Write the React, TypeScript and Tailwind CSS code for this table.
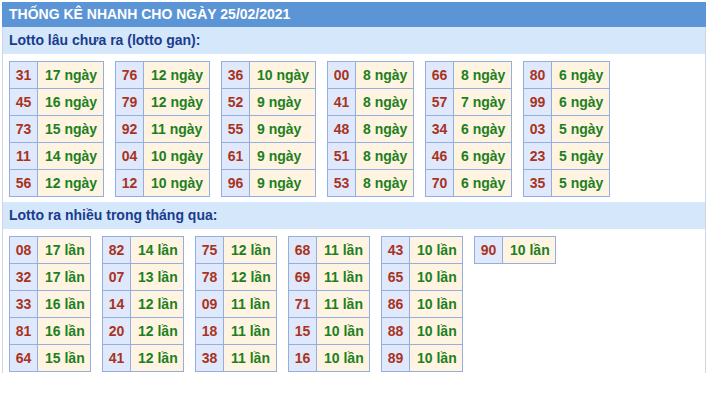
const ganData = [
  [["31", "17"], ["45", "16"], ["73", "15"], ["11", "14"], ["56", "12"]],
  [["76", "12"], ["79", "12"], ["92", "11"], ["04", "10"], ["12", "10"]],
  [["36", "10"], ["52", "9"], ["55", "9"], ["61", "9"], ["96", "9"]],
  [["00", "8"], ["41", "8"], ["48", "8"], ["51", "8"], ["53", "8"]],
  [["66", "8"], ["57", "7"], ["34", "6"], ["46", "6"], ["70", "6"]],
  [["80", "6"], ["99", "6"], ["03", "5"], ["23", "5"], ["35", "5"]],
];

const nhieuData = [
  [["08", "17"], ["32", "17"], ["33", "16"], ["81", "16"], ["64", "15"]],
  [["82", "14"], ["07", "13"], ["14", "12"], ["20", "12"], ["41", "12"]],
  [["75", "12"], ["78", "12"], ["09", "11"], ["18", "11"], ["38", "11"]],
  [["68", "11"], ["69", "11"], ["71", "11"], ["15", "10"], ["16", "10"]],
  [["43", "10"], ["65", "10"], ["86", "10"], ["88", "10"], ["89", "10"]],
  [["90", "10"]],
];

// value column widths, taken from the reference
const WIDE = "grid-cols-[28px_66px]";
const NARROW = "grid-cols-[28px_58px]";
const LAN = "grid-cols-[28px_53px]";

function StatTable({ rows, unit, cols }: { rows: string[][]; unit: string; cols: string }) {
  return (
    <div className={`grid ${cols} auto-rows-[27px] border-l border-t border-[#93afdf]`}>
      {rows.map(([num, count]) => (
        <>
          <div key={num + "n"} className="flex items-center justify-center bg-[#dfe9fb] border-r border-b border-[#93afdf] text-[#a8331f]">
            {num}
          </div>
          <div key={num + "c"} className="flex items-center pl-[7px] bg-[#fff4e2] border-r border-b border-[#93afdf] text-[#1d801d] whitespace-nowrap">
            {count} {unit}
          </div>
        </>
      ))}
    </div>
  );
}

function SubHeader({ title }: { title: string }) {
  return (
    <div className="h-[27px] flex items-center px-[6px] bg-[#d5e7fa] text-[#1a3c8e] font-bold text-[14px]">
      {title}
    </div>
  );
}

export default function App() {
  return (
    <div className="bg-white w-[707px] h-[394px] p-[2px] font-['Liberation_Sans',Arial,sans-serif]">
      <div className="w-[704px] h-[371px] border-l border-r border-[#cfd6df]">
        <div className="h-[25px] -mx-px flex items-center px-[7px] bg-[#5b95d6] text-white font-bold text-[14px]">
          THỐNG KÊ NHANH CHO NGÀY 25/02/2021
        </div>

        <SubHeader title="Lotto lâu chưa ra (lotto gan):" />
        <div className="flex items-start gap-[11px] px-[6px] pt-[7px] pb-[5px] font-bold text-[14px]">
          {ganData.map((rows, i) => (
            <StatTable key={i} rows={rows} unit="ngày" cols={i < 3 ? WIDE : NARROW} />
          ))}
        </div>

        <SubHeader title="Lotto ra nhiều trong tháng qua:" />
        <div className="flex items-start gap-[11px] px-[6px] pt-[7px] font-bold text-[14px]">
          {nhieuData.map((rows, i) => (
            <StatTable key={i} rows={rows} unit="lần" cols={LAN} />
          ))}
        </div>
      </div>
    </div>
  );
}
